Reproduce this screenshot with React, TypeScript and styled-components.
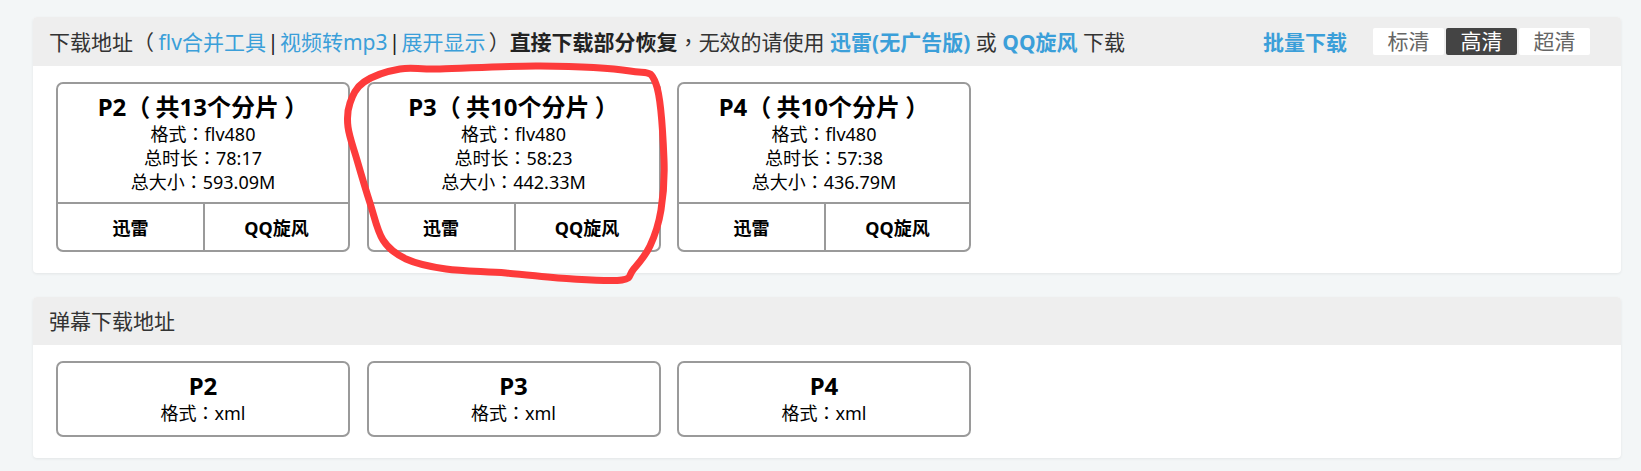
import React from "react";
import styled, { createGlobalStyle } from "styled-components";

const GlobalStyle = createGlobalStyle`
    html, body {
        margin: 0;
        padding: 0;
        background: #f3f6f7;
    }
    body {
        font-family: "Noto Sans", "Noto Sans CJK SC", sans-serif;
        color: #333;
    }
`;

const Root = styled.div`
    position: relative;
    padding: 17px 20px 13px 33px;
    display: flex;
    flex-direction: column;
    gap: 24px;
`;

const Panel = styled.section`
    background: #fff;
    border-radius: 4px;
    box-shadow: 0 1px 3px rgba(0, 0, 0, 0.07);
    overflow: hidden;
`;

const PanelHead = styled.div<{ $h: number }>`
    height: ${(p) => p.$h}px;
    background: #eeeeee;
    display: flex;
    align-items: center;
    justify-content: space-between;
    padding: 0 31px 0 16px;
    font-size: 21px;
    line-height: 28px;
    white-space: nowrap;
    color: #333;
`;

const HeadText = styled.div``;

// 全角冒号、逗号居中显示
const Punct = styled.span`
    font-family: "Noto Sans CJK TC", "Noto Sans CJK SC", sans-serif;
    line-height: 0;
`;

// 全角括号：在内侧补一点空隙，看起来居中
const Paren = styled.span<{ $dir: "l" | "r"; $gap: number }>`
    ${(p) => (p.$dir === "l" ? "margin-right" : "margin-left")}: ${(p) => p.$gap}em;
`;

const Link = styled.a`
    color: #3b9fd9;
    text-decoration: none;
`;

const BoldLink = styled(Link)`
    font-weight: 700;
`;

const Strong = styled.b`
    color: #222;
    font-weight: 700;
`;

const Sep = styled.span`
    display: inline-block;
    width: 14px;
    text-align: center;
    color: #222;
`;

const HeadTools = styled.div`
    display: flex;
    align-items: center;
    gap: 26px;
`;

const Quality = styled.div`
    display: flex;
    gap: 2px;
`;

const QualityBtn = styled.button<{ $active?: boolean }>`
    width: 71px;
    height: 27px;
    border: none;
    border-radius: 2px;
    padding: 0;
    font-family: inherit;
    font-size: 21px;
    line-height: 27px;
    background: ${(p) => (p.$active ? "#444" : "#fff")};
    color: ${(p) => (p.$active ? "#fff" : "#666")};
    cursor: pointer;
`;

const CardRow = styled.div`
    display: flex;
    gap: 16.5px;
    padding: 16px 23px 21px;
`;

const Card = styled.div`
    width: 294px;
    box-sizing: border-box;
    border: 2px solid #9a9a9a;
    border-radius: 7px;
    color: #000;
    text-align: center;
    overflow: hidden;
`;

const Info = styled.div<{ $pb?: number }>`
    padding: 8px 0 ${(p) => p.$pb ?? 8}px;
`;

const Title = styled.div`
    font-size: 24px;
    font-weight: 700;
    line-height: 30px;
`;

const Line = styled.div`
    font-size: 18px;
    line-height: 24px;
`;

const Actions = styled.div`
    display: grid;
    grid-template-columns: 1fr 1fr;
    border-top: 2px solid #9a9a9a;
`;

const Action = styled.a`
    height: 46px;
    display: flex;
    align-items: center;
    justify-content: center;
    font-size: 18px;
    font-weight: 700;
    color: #000;
    text-decoration: none;

    & + & {
        border-left: 2px solid #9a9a9a;
    }
`;

const Mark = styled.svg`
    position: absolute;
    top: 0;
    left: 0;
    pointer-events: none;
`;

function cjk(text: string, open = 0.22, close = 0.22) {
    return text.split(/([（）：，])/).map((s, i) => {
        if (s === "（")
            return (
                <Paren key={i} $dir="l" $gap={open}>
                    {s}
                </Paren>
            );
        if (s === "）")
            return (
                <Paren key={i} $dir="r" $gap={close}>
                    {s}
                </Paren>
            );
        if (s === "：" || s === "，") return <Punct key={i}>{s}</Punct>;
        return s;
    });
}

interface Part {
    name: string;
    pieces: number;
    duration: string;
    size: string;
}

const parts: Part[] = [
    { name: "P2", pieces: 13, duration: "78:17", size: "593.09M" },
    { name: "P3", pieces: 10, duration: "58:23", size: "442.33M" },
    { name: "P4", pieces: 10, duration: "57:38", size: "436.79M" },
];

// 手绘红圈
const circle = [
    [350, 103], [364, 82], [400, 69], [440, 69], [540, 66], [630, 71],
    [656, 84], [664, 160], [661, 210], [650, 246], [633, 270], [622, 280],
    [573, 279], [506, 273], [446, 269], [406, 259], [383, 240], [370, 203],
    [357, 160], [348, 127],
];

function smoothPath(pts: number[][]) {
    const n = pts.length;
    let d = `M${pts[0][0]},${pts[0][1]}`;
    for (let i = 0; i < n; i++) {
        const p0 = pts[(i - 1 + n) % n];
        const p1 = pts[i];
        const p2 = pts[(i + 1) % n];
        const p3 = pts[(i + 2) % n];
        const c1 = [p1[0] + (p2[0] - p0[0]) / 6, p1[1] + (p2[1] - p0[1]) / 6];
        const c2 = [p2[0] - (p3[0] - p1[0]) / 6, p2[1] - (p3[1] - p1[1]) / 6];
        d += ` C${c1[0]},${c1[1]} ${c2[0]},${c2[1]} ${p2[0]},${p2[1]}`;
    }
    return d;
}

const App: React.FC = () => {
    return (
        <Root>
            <GlobalStyle />
            <Panel>
                <PanelHead $h={49}>
                    <HeadText>
                        下载地址{cjk("（")}
                        <Link href="#">flv合并工具</Link>
                        <Sep>|</Sep>
                        <Link href="#">视频转mp3</Link>
                        <Sep>|</Sep>
                        <Link href="#">展开显示</Link>
                        {cjk("）", 0, 0.15)}
                        <Strong>直接下载部分恢复</Strong>
                        {cjk("，无效的请使用")}{" "}
                        <BoldLink href="#">迅雷(无广告版)</BoldLink> 或{" "}
                        <BoldLink href="#">QQ旋风</BoldLink> 下载
                    </HeadText>
                    <HeadTools>
                        <BoldLink href="#">批量下载</BoldLink>
                        <Quality>
                            <QualityBtn>标清</QualityBtn>
                            <QualityBtn $active>高清</QualityBtn>
                            <QualityBtn>超清</QualityBtn>
                        </Quality>
                    </HeadTools>
                </PanelHead>
                <CardRow>
                    {parts.map((p) => (
                        <Card key={p.name}>
                            <Info>
                                <Title>{cjk(`${p.name}（共${p.pieces}个分片）`)}</Title>
                                <Line>{cjk("格式：flv480")}</Line>
                                <Line>{cjk(`总时长：${p.duration}`)}</Line>
                                <Line>{cjk(`总大小：${p.size}`)}</Line>
                            </Info>
                            <Actions>
                                <Action href="#">迅雷</Action>
                                <Action href="#">QQ旋风</Action>
                            </Actions>
                        </Card>
                    ))}
                </CardRow>
            </Panel>

            <Panel>
                <PanelHead $h={48}>
                    <HeadText>弹幕下载地址</HeadText>
                </PanelHead>
                <CardRow>
                    {parts.map((p) => (
                        <Card key={p.name}>
                            <Info $pb={10}>
                                <Title>{p.name}</Title>
                                <Line>{cjk("格式：xml")}</Line>
                            </Info>
                        </Card>
                    ))}
                </CardRow>
            </Panel>

            <Mark width={1641} height={471}>
                <path
                    d={smoothPath(circle)}
                    fill="none"
                    stroke="#fd3b3b"
                    strokeWidth={7}
                    strokeLinecap="round"
                    strokeLinejoin="round"
                />
            </Mark>
        </Root>
    );
};

export default App;
